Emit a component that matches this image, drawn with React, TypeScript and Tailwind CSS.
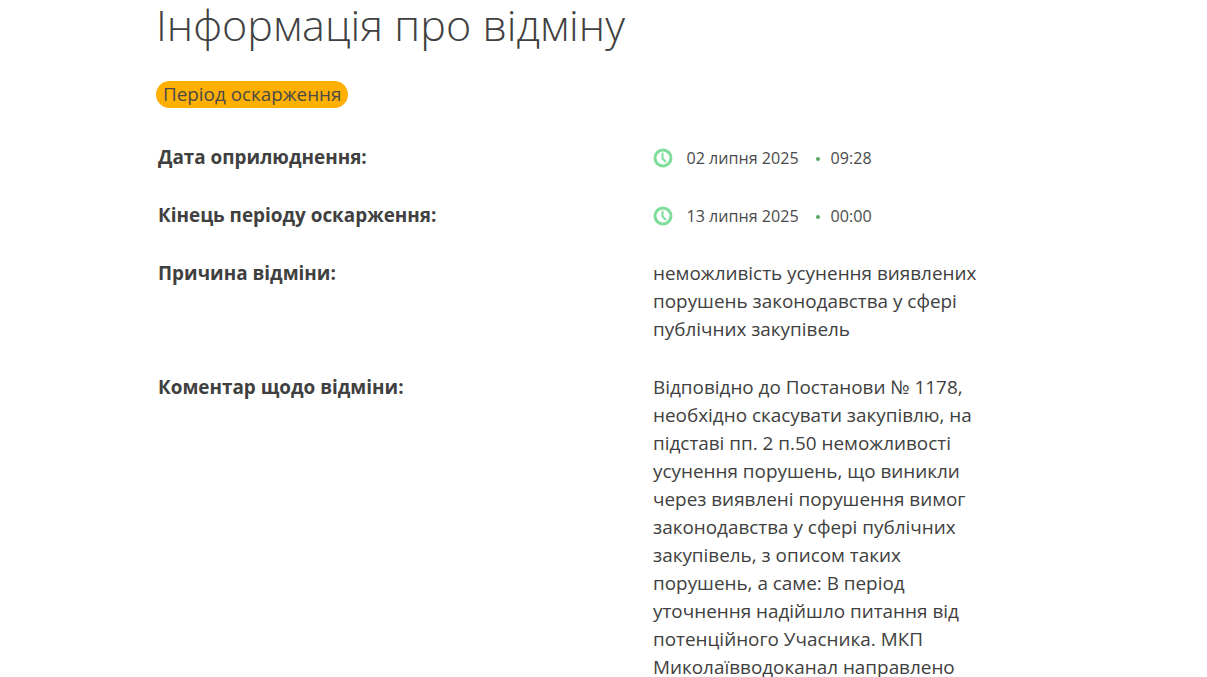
import type { ReactNode } from "react";

function ClockIcon() {
  return (
    <svg width="20" height="20" viewBox="0 0 20 20" fill="none" className="shrink-0">
      <circle cx="10" cy="10" r="8" stroke="#7fdd9c" strokeWidth="3" />
      <path d="M9.5 5.5V10.5L12.5 13.5" stroke="#7fdd9c" strokeWidth="2" strokeLinecap="round" />
    </svg>
  );
}

function DateValue({ date, time }: { date: string; time: string }) {
  return (
    <div className="flex items-center h-7 pt-[2px] text-[16.1px] text-[#4a4a4a]">
      <ClockIcon />
      <span className="ml-[13.5px]">{date}</span>
      <span className="ml-[17px] mr-[11px] w-[4px] h-[4px] rounded-full bg-[#5aa866] mt-[1px]" />
      <span>{time}</span>
    </div>
  );
}

function Row({ label, children, className }: { label: string; children: ReactNode; className: string }) {
  return (
    <div className={"flex " + className}>
      <div className="w-[495px] font-bold text-[18.9px] leading-7 text-[#404040] shrink-0">{label}</div>
      <div className="w-[330px] text-[18.9px] leading-7 text-[#404040]">{children}</div>
    </div>
  );
}

export default function App() {
  return (
    <div className="h-[677px] overflow-hidden bg-white font-['Open_Sans','Noto_Sans',sans-serif]">
      <div className="ml-[158px] w-[900px]">
        <h1 className="-ml-[2px] text-[43.1px] font-light leading-[50px] text-[#404040]">Інформація про відміну</h1>
        <div className="mt-[31px] mb-[35px]">
          <span className="inline-block -ml-[2px] rounded-full bg-[#ffb000] px-[7px] text-[18.85px] leading-[27px] text-[#4a4a4a]">
            Період оскарження
          </span>
        </div>
        <Row label="Дата оприлюднення:" className="mb-[30px]">
          <DateValue date="02 липня 2025" time="09:28" />
        </Row>
        <Row label="Кінець періоду оскарження:" className="mb-[30px]">
          <DateValue date="13 липня 2025" time="00:00" />
        </Row>
        <Row label="Причина відміни:" className="mb-[30px]">
          неможливість усунення виявлених порушень законодавства у сфері публічних закупівель
        </Row>
        <Row label="Коментар щодо відміни:" className="">
          Відповідно до Постанови № 1178, необхідно скасувати закупівлю, на підставі пп. 2 п.50 неможливості усунення порушень, що виникли через виявлені порушення вимог законодавства у сфері публічних закупівель, з описом таких порушень, а саме: В період уточнення надійшло питання від потенційного Учасника. МКП Миколаївводоканал направлено
        </Row>
      </div>
    </div>
  );
}
